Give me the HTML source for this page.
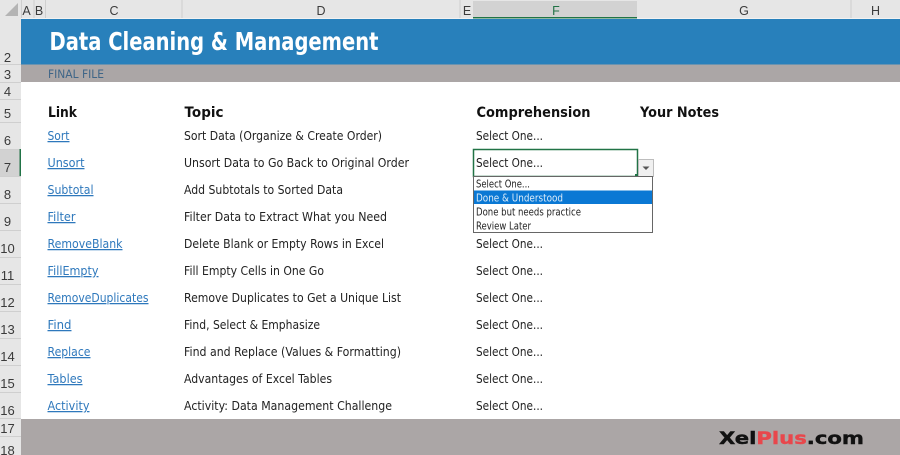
<!DOCTYPE html>
<html><head><meta charset="utf-8"><style>
html,body{margin:0;padding:0;background:#fff;width:900px;height:455px;overflow:hidden}
svg{display:block}
text{font-family:"DejaVu Sans","Liberation Sans",sans-serif}
.h{fill:#3c3c3c;text-anchor:middle;font-family:"Liberation Sans",sans-serif;font-size:12.5px}
.r{font-size:13px;fill:#3a3a3a;text-anchor:middle;font-family:"Liberation Sans",sans-serif}
.l{font-size:12.6px;fill:#2e78bc;text-decoration:underline}
.t{font-size:12.6px;fill:#222}
.b{font-size:14.5px;font-weight:bold;fill:#111}
.d{font-size:10.4px;fill:#222}
</style></head><body>
<svg width="900" height="455" viewBox="0 0 900 455" xmlns="http://www.w3.org/2000/svg">
<rect width="900" height="455" fill="#fff"/>
<!-- headers -->
<rect width="900" height="18.5" fill="#e6e6e6"/>
<rect x="0" y="0" width="21" height="455" fill="#e6e6e6"/>
<path d="M18 3V16H5Z" fill="#b4b4b4"/>
<rect x="473" y="1" width="164" height="17" fill="#d2d2d2"/>
<rect x="473" y="17" width="164" height="1.5" fill="#217346"/>
<g stroke="#cfcfcf" stroke-width="1"><path d="M21.5 0V18M34 0V18M45.5 0V18M182 0V18M460 0V18M851 0V18"/></g>
<g class="cols">
<text class="h" x="26.5" y="15">A</text><text class="h" x="39" y="15">B</text><text class="h" x="114" y="15">C</text><text class="h" x="321" y="15">D</text><text class="h" x="467" y="15">E</text><text class="h" x="556" y="15" style="fill:#217346">F</text><text class="h" x="744" y="15">G</text><text class="h" x="875.5" y="15">H</text>
</g>
<!-- row header lines -->
<g stroke="#cfcfcf" stroke-width="1"><path d="M0 64.5H21M0 82.5H21M0 99.5H21M0 122.5H21M0 149.5H21M0 176.5H21M0 203.5H21M0 230.5H21M0 257.5H21M0 284.5H21M0 311.5H21M0 338.5H21M0 365.5H21M0 392.5H21M0 418.5H21M0 436.5H21"/></g>
<rect x="0" y="150" width="20" height="26" fill="#d2d2d2"/>
<rect x="19.5" y="149" width="1.5" height="27" fill="#217346"/>
<g>
<text class="r" x="7.5" y="62">2</text><text class="r" x="7.5" y="79">3</text><text class="r" x="7.5" y="96">4</text><text class="r" x="7.5" y="118">5</text><text class="r" x="7.5" y="145">6</text><text class="r" x="7.5" y="172">7</text><text class="r" x="7.5" y="199">8</text><text class="r" x="7.5" y="226">9</text><text class="r" x="7.5" y="253">10</text><text class="r" x="7.5" y="280">11</text><text class="r" x="7.5" y="307">12</text><text class="r" x="7.5" y="334">13</text><text class="r" x="7.5" y="361">14</text><text class="r" x="7.5" y="388">15</text><text class="r" x="7.5" y="415">16</text><text class="r" x="7.5" y="433">17</text><text class="r" x="7.5" y="455">18</text>
</g>
<!-- bands -->
<rect x="21" y="19" width="879" height="45.5" fill="#2880bb"/>
<rect x="21" y="64.5" width="879" height="17.5" fill="#aba6a6"/>
<rect x="21" y="419" width="879" height="36" fill="#aba6a6"/>
<text x="49.5" y="50" font-size="25" font-weight="bold" fill="#fff" textLength="329" lengthAdjust="spacingAndGlyphs">Data Cleaning &amp; Management</text>
<text x="48" y="78" font-size="11.5" fill="#3f6688" textLength="56" lengthAdjust="spacingAndGlyphs">FINAL FILE</text>
<!-- table headings -->
<text class="b" x="48" y="117" textLength="29" lengthAdjust="spacingAndGlyphs">Link</text>
<text class="b" x="184.5" y="117" textLength="39" lengthAdjust="spacingAndGlyphs">Topic</text>
<text class="b" x="476.5" y="117" textLength="114" lengthAdjust="spacingAndGlyphs">Comprehension</text>
<text class="b" x="640" y="117" textLength="79" lengthAdjust="spacingAndGlyphs">Your Notes</text>
<!-- links -->
<text class="l" x="47.5" y="140" textLength="22" lengthAdjust="spacingAndGlyphs">Sort</text>
<text class="l" x="47.5" y="167" textLength="37" lengthAdjust="spacingAndGlyphs">Unsort</text>
<text class="l" x="47.5" y="194" textLength="46" lengthAdjust="spacingAndGlyphs">Subtotal</text>
<text class="l" x="47.5" y="221" textLength="28" lengthAdjust="spacingAndGlyphs">Filter</text>
<text class="l" x="47.5" y="248" textLength="75" lengthAdjust="spacingAndGlyphs">RemoveBlank</text>
<text class="l" x="47.5" y="275" textLength="51" lengthAdjust="spacingAndGlyphs">FillEmpty</text>
<text class="l" x="47.5" y="302" textLength="101" lengthAdjust="spacingAndGlyphs">RemoveDuplicates</text>
<text class="l" x="47.5" y="329" textLength="24" lengthAdjust="spacingAndGlyphs">Find</text>
<text class="l" x="47.5" y="356" textLength="43" lengthAdjust="spacingAndGlyphs">Replace</text>
<text class="l" x="47.5" y="383" textLength="35" lengthAdjust="spacingAndGlyphs">Tables</text>
<text class="l" x="47.5" y="410" textLength="42" lengthAdjust="spacingAndGlyphs">Activity</text>
<!-- topics -->
<text class="t" x="184" y="140" textLength="198" lengthAdjust="spacingAndGlyphs">Sort Data (Organize &amp; Create Order)</text>
<text class="t" x="184" y="167" textLength="225" lengthAdjust="spacingAndGlyphs">Unsort Data to Go Back to Original Order</text>
<text class="t" x="184" y="194" textLength="159" lengthAdjust="spacingAndGlyphs">Add Subtotals to Sorted Data</text>
<text class="t" x="184" y="221" textLength="203" lengthAdjust="spacingAndGlyphs">Filter Data to Extract What you Need</text>
<text class="t" x="184" y="248" textLength="200" lengthAdjust="spacingAndGlyphs">Delete Blank or Empty Rows in Excel</text>
<text class="t" x="184" y="275" textLength="140" lengthAdjust="spacingAndGlyphs">Fill Empty Cells in One Go</text>
<text class="t" x="184" y="302" textLength="217" lengthAdjust="spacingAndGlyphs">Remove Duplicates to Get a Unique List</text>
<text class="t" x="184" y="329" textLength="136" lengthAdjust="spacingAndGlyphs">Find, Select &amp; Emphasize</text>
<text class="t" x="184" y="356" textLength="217" lengthAdjust="spacingAndGlyphs">Find and Replace (Values &amp; Formatting)</text>
<text class="t" x="184" y="383" textLength="148" lengthAdjust="spacingAndGlyphs">Advantages of Excel Tables</text>
<text class="t" x="184" y="410" textLength="208" lengthAdjust="spacingAndGlyphs">Activity: Data Management Challenge</text>
<!-- comprehension -->
<g>
<text class="t" x="476" y="140" textLength="67" lengthAdjust="spacingAndGlyphs">Select One...</text>
<text class="t" x="476" y="167" textLength="67" lengthAdjust="spacingAndGlyphs">Select One...</text>
<text class="t" x="476" y="248" textLength="67" lengthAdjust="spacingAndGlyphs">Select One...</text>
<text class="t" x="476" y="275" textLength="67" lengthAdjust="spacingAndGlyphs">Select One...</text>
<text class="t" x="476" y="302" textLength="67" lengthAdjust="spacingAndGlyphs">Select One...</text>
<text class="t" x="476" y="329" textLength="67" lengthAdjust="spacingAndGlyphs">Select One...</text>
<text class="t" x="476" y="356" textLength="67" lengthAdjust="spacingAndGlyphs">Select One...</text>
<text class="t" x="476" y="383" textLength="67" lengthAdjust="spacingAndGlyphs">Select One...</text>
<text class="t" x="476" y="410" textLength="67" lengthAdjust="spacingAndGlyphs">Select One...</text>
</g>
<!-- active cell -->
<rect x="473.5" y="149.5" width="164" height="27" fill="none" stroke="#217346" stroke-width="1.5"/>
<rect x="635" y="174" width="4" height="4" fill="#217346"/>
<!-- dropdown button -->
<rect x="638.5" y="159.5" width="15" height="17" fill="#f0f0f0" stroke="#bdbdbd"/>
<path d="M642.5 166.5H649.5L646 170Z" fill="#555"/>
<!-- list -->
<rect x="473.5" y="176.5" width="179" height="56" fill="#fff" stroke="#666"/>
<rect x="474" y="190.5" width="178" height="13.5" fill="#0a78d4"/>
<text class="d" x="476" y="187.5" textLength="54" lengthAdjust="spacingAndGlyphs">Select One...</text>
<text class="d" x="476" y="201.5" style="fill:#dcecf9" textLength="87" lengthAdjust="spacingAndGlyphs">Done &amp; Understood</text>
<text class="d" x="476" y="215.5" textLength="105" lengthAdjust="spacingAndGlyphs">Done but needs practice</text>
<text class="d" x="476" y="229.5" textLength="55" lengthAdjust="spacingAndGlyphs">Review Later</text>
<!-- logo -->
<text x="719" y="444" font-size="17" font-weight="bold" fill="#111" textLength="145" lengthAdjust="spacingAndGlyphs" stroke="#111" stroke-width=".4">Xel<tspan fill="#e8474c" stroke="#e8474c">Plus</tspan>.com</text>
</svg>
</body></html>
